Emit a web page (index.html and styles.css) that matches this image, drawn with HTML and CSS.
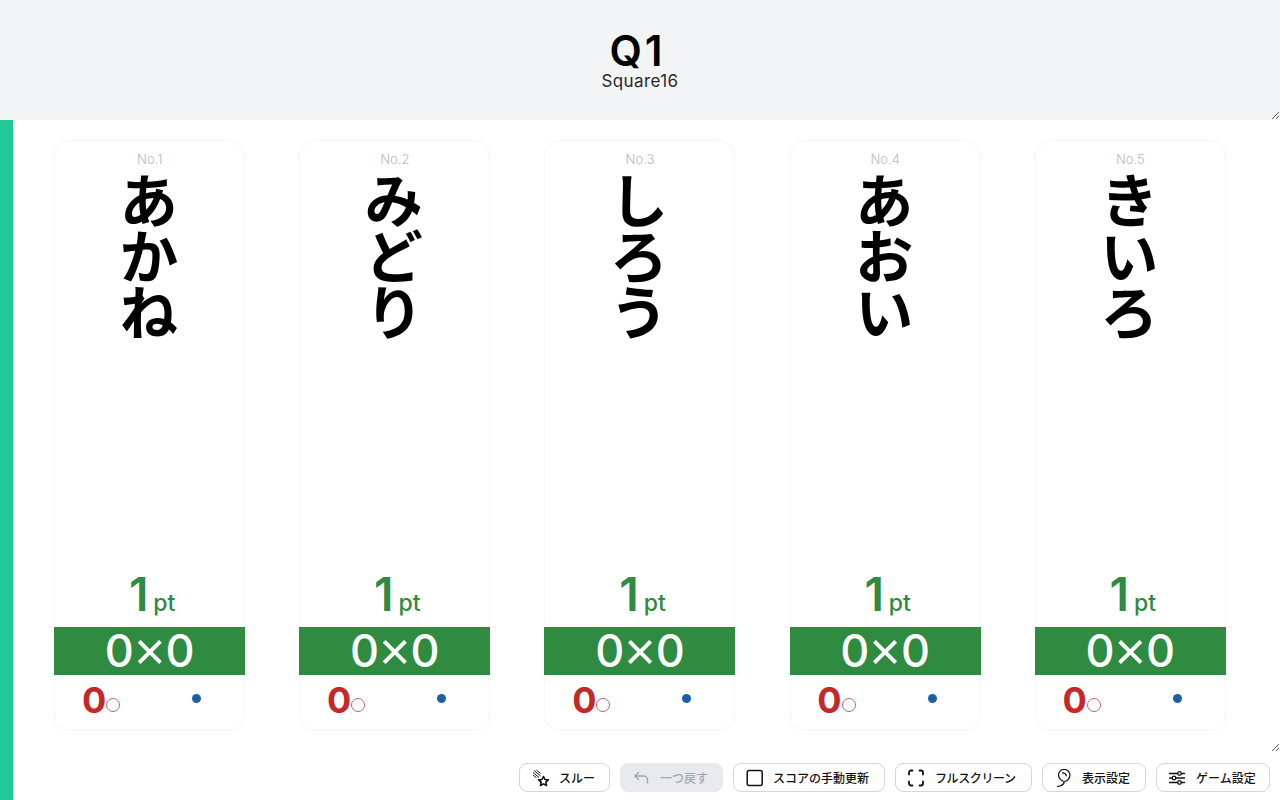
FILE: index.html
```html
<!DOCTYPE html>
<html lang="ja">
<head>
<meta charset="utf-8">
<title>Q1</title>
<link rel="stylesheet" href="styles.css">
</head>
<body>
<div class="progress"></div>
<header class="head">
  <div class="q-num">Q1</div>
  <div class="q-name">Square16</div>
</header>
<main class="board">
  <section class="cards">
    <article class="card">
      <div class="no">No.1</div>
      <div class="name"><span class="vert">あかね</span></div>
      <div class="pt"><span class="pt-n">1</span><span class="pt-u">pt</span></div>
      <div class="bar"><span>0</span><span class="times">×</span><span>0</span></div>
      <div class="foot"><div class="maru"><span class="maru-n">0</span><span class="ring"></span></div><div class="batsu"><span class="dot"></span></div></div>
    </article>
    <article class="card">
      <div class="no">No.2</div>
      <div class="name"><span class="vert">みどり</span></div>
      <div class="pt"><span class="pt-n">1</span><span class="pt-u">pt</span></div>
      <div class="bar"><span>0</span><span class="times">×</span><span>0</span></div>
      <div class="foot"><div class="maru"><span class="maru-n">0</span><span class="ring"></span></div><div class="batsu"><span class="dot"></span></div></div>
    </article>
    <article class="card">
      <div class="no">No.3</div>
      <div class="name"><span class="vert">しろう</span></div>
      <div class="pt"><span class="pt-n">1</span><span class="pt-u">pt</span></div>
      <div class="bar"><span>0</span><span class="times">×</span><span>0</span></div>
      <div class="foot"><div class="maru"><span class="maru-n">0</span><span class="ring"></span></div><div class="batsu"><span class="dot"></span></div></div>
    </article>
    <article class="card">
      <div class="no">No.4</div>
      <div class="name"><span class="vert">あおい</span></div>
      <div class="pt"><span class="pt-n">1</span><span class="pt-u">pt</span></div>
      <div class="bar"><span>0</span><span class="times">×</span><span>0</span></div>
      <div class="foot"><div class="maru"><span class="maru-n">0</span><span class="ring"></span></div><div class="batsu"><span class="dot"></span></div></div>
    </article>
    <article class="card">
      <div class="no">No.5</div>
      <div class="name"><span class="vert">きいろ</span></div>
      <div class="pt"><span class="pt-n">1</span><span class="pt-u">pt</span></div>
      <div class="bar"><span>0</span><span class="times">×</span><span>0</span></div>
      <div class="foot"><div class="maru"><span class="maru-n">0</span><span class="ring"></span></div><div class="batsu"><span class="dot"></span></div></div>
    </article>
  </section>
</main>
<footer class="actions">
  <button class="btn b-skip"><svg class="ico" viewBox="0 0 18 18"><path d="M1 3.500l6 5M2 1.500l6.500 5.500M4.500 1l4 3.500M1 6l3.500 3" fill="none" stroke="#111" stroke-width="1"/><path d="M11.500 7.500l1.500 3 3.300.4-2.400 2.300.6 3.300-3-1.600-3 1.600.6-3.300-2.400-2.300 3.300-.4z" fill="none" stroke="#111" stroke-width="1.600" stroke-linejoin="round"/></svg><span>スルー</span></button>
  <button class="btn off b-undo"><svg class="ico" viewBox="0 0 18 18"><path d="M5.500 3.500L2 7l3.500 3.500M2 7h8.500A4 4 0 0 1 14.500 11v3" fill="none" stroke="#a3a8af" stroke-width="1.500" stroke-linecap="round" stroke-linejoin="round"/></svg><span>一つ戻す</span></button>
  <button class="btn b-score"><svg class="ico" viewBox="0 0 18 18"><rect x="1.200" y="1.500" width="15" height="15" rx="2" fill="none" stroke="#111" stroke-width="1.500"/></svg><span>スコアの手動更新</span></button>
  <button class="btn b-full"><svg class="ico" viewBox="0 0 18 18"><path d="M1 5.500V3.500A2 2 0 0 1 3 1.500h1.500M11.500 1.500H13a2 2 0 0 1 2 2v2M15 12.500v2a2 2 0 0 1-2 2h-1.500M4.500 16.500H3a2 2 0 0 1-2-2v-2" fill="none" stroke="#111" stroke-width="1.800" stroke-linecap="round"/></svg><span>フルスクリーン</span></button>
  <button class="btn b-view"><svg class="ico" viewBox="0 0 18 18"><path d="M9 .500c3.200 0 6 2.300 6 5.500 0 3.200-2.800 6.500-5.500 6.500S3.500 9.200 3.500 6C3.500 2.800 5.800.500 9 .500zM9 12.500c.4 2.200-1 4-6.500 5M7.500 3.800c1.700 0 3.500 1.100 3.800 3" fill="none" stroke="#111" stroke-width="1.200" stroke-linecap="round"/></svg><span>表示設定</span></button>
  <button class="btn b-game"><svg class="ico" viewBox="0 0 18 18"><path d="M.500 4.500h8M12.500 4.500h3M.500 9h2.500M7 9h8.500M.500 13.500h8M12.500 13.500h3" fill="none" stroke="#111" stroke-width="1.400" stroke-linecap="round"/><circle cx="10.500" cy="4.500" r="1.800" fill="none" stroke="#111" stroke-width="1.300"/><circle cx="5" cy="9" r="1.800" fill="none" stroke="#111" stroke-width="1.300"/><circle cx="10.500" cy="13.500" r="1.800" fill="none" stroke="#111" stroke-width="1.300"/></svg><span>ゲーム設定</span></button>
</footer>
</body>
</html>
```
FILE: styles.css
```css
* { box-sizing: border-box; }
html, body { margin: 0; height: 800px; overflow: hidden; background: #fff; }
body {
  font-family: Inter, "Noto Sans CJK JP", sans-serif;
  color: #000;
  display: flex;
  flex-direction: column;
  position: relative;
}
.progress {
  position: absolute;
  left: 0; top: 120px; bottom: 0;
  width: 13px;
  background: #22c997;
  z-index: 2;
}
.head {
  height: 120px;
  flex: none;
  background: #f3f4f6;
  display: flex;
  flex-direction: column;
  align-items: center;
  padding-top: 31px;
  resize: vertical;
  overflow: hidden;
}
.q-num { font-size: 42px; font-weight: 600; line-height: 40px; letter-spacing: 3px; margin-left: -5px; }
.q-name { font-size: 17px; line-height: 20px; color: #2a2a2a; letter-spacing: .4px; }
.board {
  height: 632px;
  flex: none;
  resize: vertical;
  overflow: hidden;
}
.cards {
  display: flex;
  justify-content: space-evenly;
  padding-top: 20px;
}
.card {
  width: 191px;
  height: 591px;
  border: 1px solid #f5f6f7;
  border-radius: 16px;
  display: flex;
  flex-direction: column;
  align-items: stretch;
}
.no { text-align: center; font-size: 13px; line-height: 16px; font-weight: 300; color: #b8babe; margin-top: 10px; }
.name { flex: 1; display: flex; justify-content: center; padding-top: 4px; }
.vert {
  writing-mode: vertical-rl;
  font-family: "Noto Sans CJK JP", sans-serif;
  font-weight: 700;
  font-size: 59px;
  letter-spacing: -3px;
  line-height: 1;
  margin-left: -2px;
}
.pt { display: flex; justify-content: center; align-items: flex-start; gap: 5px; color: #2e8b40; height: 58px; }
.pt-n { font-size: 46px; font-weight: 600; line-height: 50px; margin-left: 5px; }
.pt-u { font-size: 23px; font-weight: 500; line-height: 28px; margin-top: 20px; }
.bar {
  margin: 0 -1px;
  height: 48px;
  background: #2e8b40;
  color: #fff;
  display: flex;
  justify-content: center;
  align-items: center;
  font-size: 45px;
  font-weight: 500;
  line-height: 48px;
}
.times { font-family: "Liberation Sans", sans-serif; font-size: 54px; font-weight: 400; line-height: 48px; }
.foot { height: 55px; display: flex; padding-top: 11px; }
.maru { width: 65px; display: flex; justify-content: flex-end; align-items: flex-start; color: #c62828; flex: none; }
.maru-n { font-size: 36px; font-weight: 700; line-height: 28px; }
.ring { width: 14px; height: 14px; border: 1px solid #c4626a; border-radius: 50%; margin-top: 12px; flex: none; }
.batsu { flex: 1; position: relative; }
.dot { position: absolute; left: 72px; top: 8px; width: 9px; height: 9px; border-radius: 50%; background: #1b5fa8; }
.actions {
  flex: 1;
  display: flex;
  justify-content: flex-end;
  align-items: flex-start;
  gap: 10px;
  padding: 11px 10px 0 0;
}
.btn {
  height: 29px;
  display: flex;
  align-items: center;
  gap: 9px;
  padding: 0 0 0 12px;
  background: #fff;
  border: 1px solid #d4d6da;
  border-radius: 8px;
  font-family: "Noto Sans CJK JP", sans-serif;
  font-size: 12px;
  font-weight: 500;
  color: #111;
  white-space: nowrap;
}
.btn.off { background: #e8eaed; border-color: #e8eaed; color: #a3a8af; }
.b-skip { width: 91px; }
.b-undo { width: 103px; }
.b-score { width: 152px; }
.b-full { width: 137px; }
.b-full span { letter-spacing: -.4px; }
.b-view { width: 104px; }
.b-game { width: 114px; }
.ico { width: 18px; height: 18px; flex: none; }
```
